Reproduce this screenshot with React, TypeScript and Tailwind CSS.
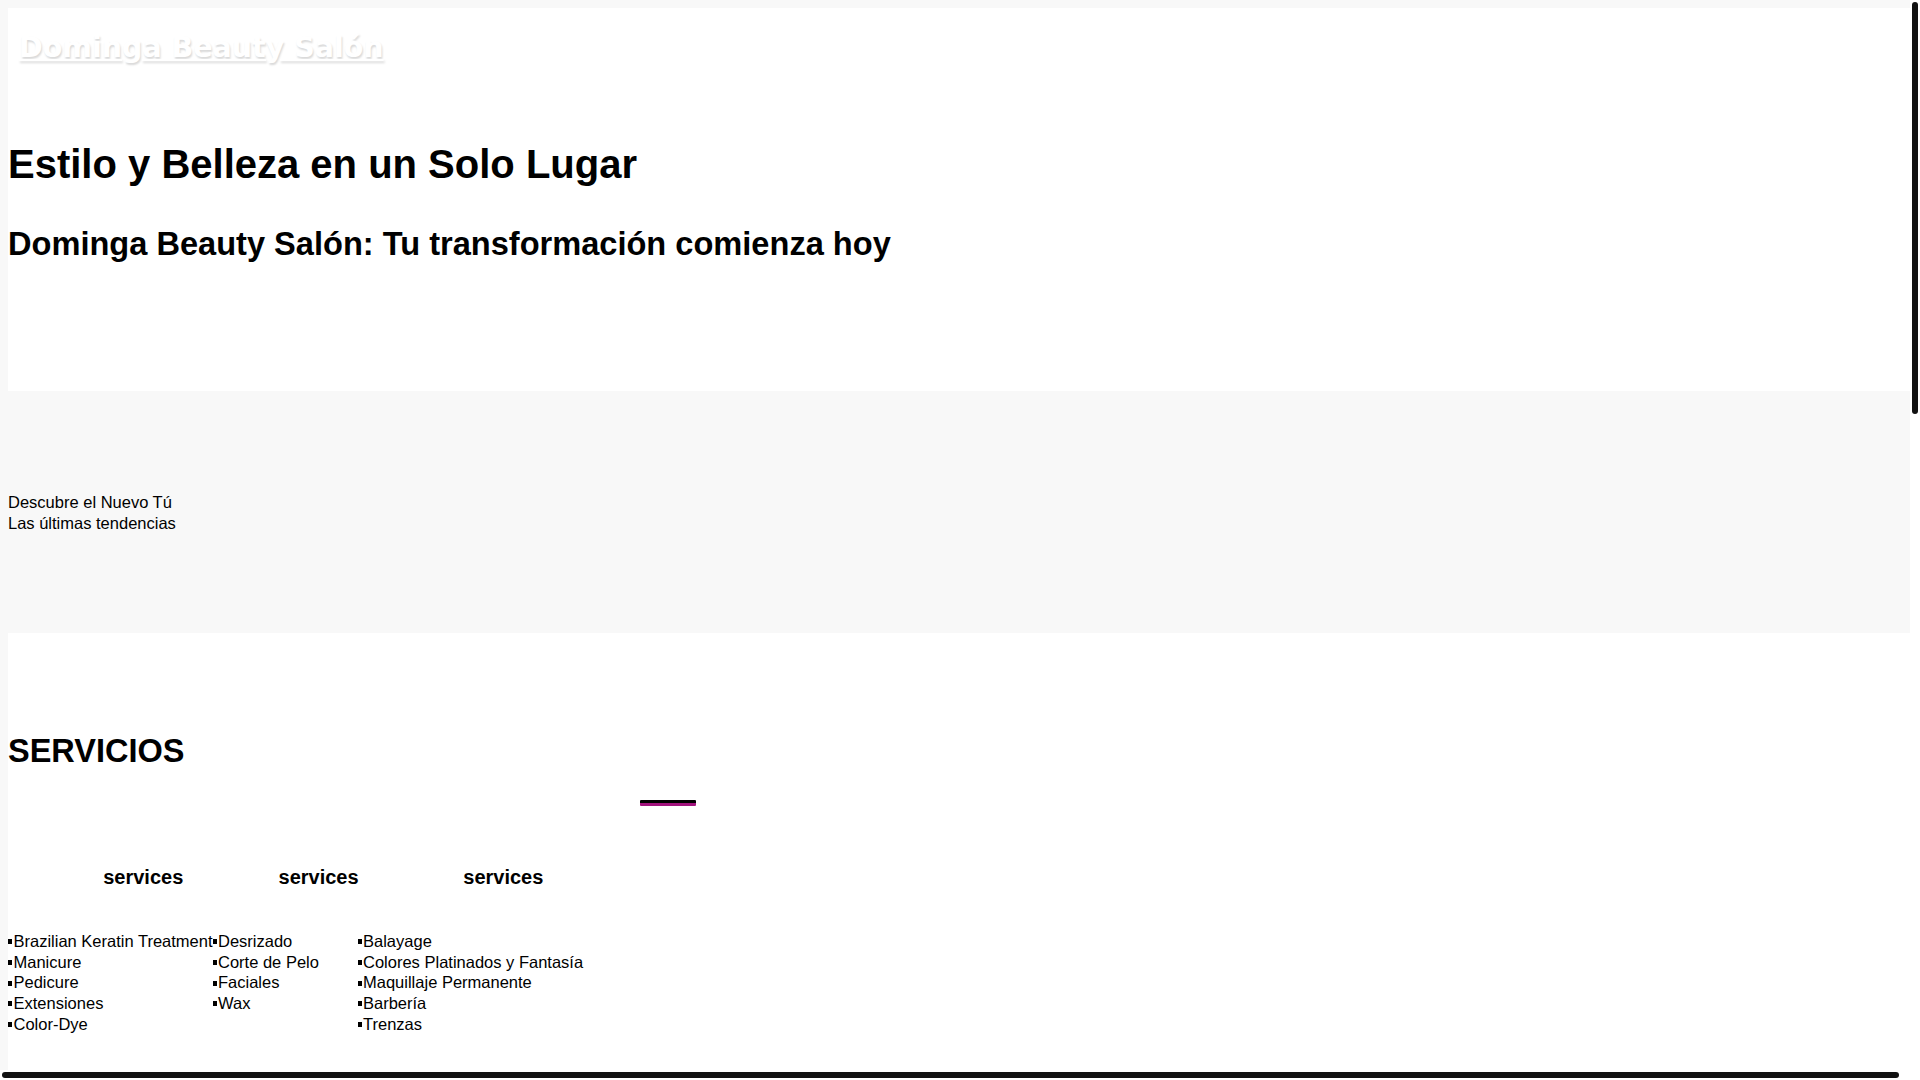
import React from 'react';

const columns = [
  {
    width: 'w-auto',
    items: ['Brazilian Keratin Treatment', 'Manicure', 'Pedicure', 'Extensiones', 'Color-Dye'],
  },
  {
    width: 'w-[145px]',
    items: ['Desrizado', 'Corte de Pelo', 'Faciales', 'Wax'],
  },
  {
    width: 'w-auto',
    items: ['Balayage', 'Colores Platinados y Fantasía', 'Maquillaje Permanente', 'Barbería', 'Trenzas'],
  },
];

const ServiceColumn = ({ width, items }: { width: string; items: string[] }) => (
  <div className={`${width} shrink-0 flex flex-col`}>
    <h3 className="pl-[66px] text-center text-[20px] font-bold leading-[23px]">services</h3>
    <ul className="mt-[42px] text-[16.5px] leading-[20.7px] whitespace-nowrap">
      {items.map((item) => (
        <li key={item} className="flex items-center">
          <span className="inline-block w-[4px] h-[5px] bg-black mr-[1.5px] mt-[1px]" />
          {item}
        </li>
      ))}
    </ul>
  </div>
);

const App = () => {
  return (
    <div className="relative w-[1920px] h-[1080px] overflow-hidden bg-white text-black font-['Liberation_Sans',Arial,sans-serif]">
      <div className="w-[1910px] h-[1070px] overflow-hidden bg-[#f8f8f8] pt-2 pl-2">
        {/* header */}
        <header className="h-[383px] bg-white">
          <nav className="pt-[24px] pl-[11px]">
            <a
              href="#"
              className="text-[28.5px] leading-[32px] font-bold text-white underline font-['DejaVu_Sans',Verdana,sans-serif] [text-shadow:1px_2px_2px_#d9d9d9]"
            >
              Dominga Beauty Salón
            </a>
          </nav>
          <h1 className="mt-[77px] text-[40px] leading-[46px] font-bold">Estilo y Belleza en un Solo Lugar</h1>
          <h2 className="mt-[38px] text-[32.6px] leading-[37px] font-bold">
            Dominga Beauty Salón: Tu transformación comienza hoy
          </h2>
        </header>

        {/* hero */}
        <section className="h-[242px] pt-[101px] text-[16.5px] leading-[20.7px]">
          <p>Descubre el Nuevo Tú</p>
          <p>Las últimas tendencias</p>
        </section>

        {/* services */}
        <section className="bg-white h-[500px] pt-[100px]">
          <h2 className="text-[32.5px] leading-[37px] font-bold">SERVICIOS</h2>
          <div className="ml-[632px] mt-[30px] w-[56px] h-[6px] border-t-[3px] border-b-[3px] border-t-black border-b-[#a1137c] rounded-[1px]" />
          <div className="mt-[60px] flex">
            {columns.map((c, i) => (
              <ServiceColumn key={i} width={c.width} items={c.items} />
            ))}
          </div>
        </section>
      </div>

      {/* scrollbar thumbs */}
      <div className="absolute top-[2px] right-[2px] w-[6px] h-[412px] rounded-full bg-[#111]" />
      <div className="absolute bottom-[2px] left-[2px] h-[6px] w-[1897px] rounded-full bg-[#111]" />
    </div>
  );
};

export default App;
